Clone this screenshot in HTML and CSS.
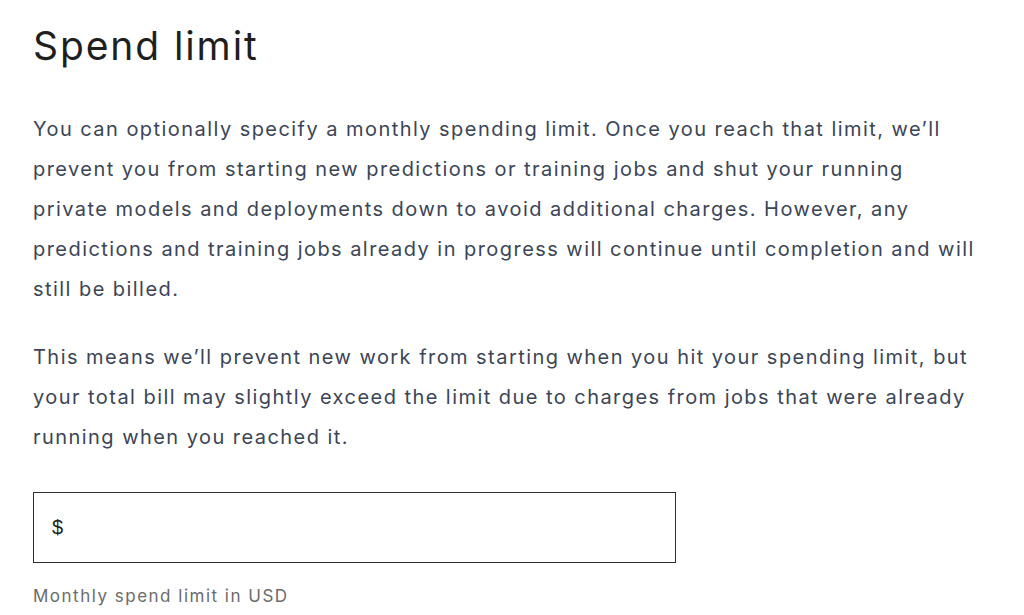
FILE: index.html
```html
<!DOCTYPE html>
<html>
<head>
<meta charset="utf-8">
<link rel="stylesheet" href="styles.css">
</head>
<body>
<main class="page">
  <h1 class="title">Spend limit</h1>
  <p class="text">You can optionally specify a monthly spending limit. Once you reach that limit, we’ll prevent you from starting new predictions or training jobs and shut your running private models and deployments down to avoid additional charges. However, any predictions and training jobs already in progress will continue until completion and will still be billed.</p>
  <p class="text">This means we’ll prevent new work from starting when you hit your spending limit, but your total bill may slightly exceed the limit due to charges from jobs that were already running when you reached it.</p>
  <div class="field">
    <span class="prefix">$</span>
    <input class="input" type="text">
  </div>
  <p class="help">Monthly spend limit in USD</p>
</main>
</body>
</html>
```
FILE: styles.css
```css
html, body { margin: 0; padding: 0; background: #fff; }
body { font-family: Inter, "Noto Sans", sans-serif; }
.page { padding: 20px 33px 0 33px; width: 951px; }
.title {
  margin: 0;
  font-size: 39px;
  font-weight: 400;
  color: #1f1f1f;
  line-height: 52px;
  letter-spacing: 1.9px;
}
.text {
  margin: 37px 0 0 0;
  font-size: 20px;
  line-height: 40px;
  color: #3b4556;
  letter-spacing: 1.45px;
}
.text + .text { margin-top: 28px; }
.field {
  margin-top: 35px;
  width: 641px;
  height: 69px;
  border: 1px solid #2e2e2e;
  display: flex;
  align-items: center;
}
.prefix {
  padding-left: 18px;
  font-family: "Liberation Sans", Arial, sans-serif;
  font-size: 20px;
  color: #222;
}
.input { border: none; outline: none; flex: 1; font-size: 19px; height: 60px; background: transparent; }
.help {
  margin: 23px 0 0 0;
  font-size: 17px;
  color: #6b6b6b;
  letter-spacing: 1.5px;
}
```
